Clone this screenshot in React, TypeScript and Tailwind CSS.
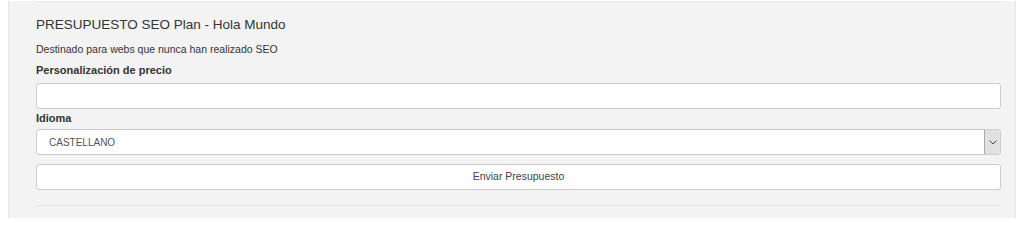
import React from "react";

const App = () => {
  return (
    <div className="h-[218px] w-[1024px] bg-white overflow-hidden font-['Liberation_Sans',Arial,sans-serif] text-[#333]">
      <div className="ml-[8px] w-[1008px] h-full border-x border-[#e3e3e3] bg-[#f3f3f3] pl-[27px] pr-[14px]">
        <div className="h-[1px] mt-[1px] bg-[#e6e6e6]" />

        <h3 className="mt-[15px] text-[13.5px] leading-[16px] text-[#333]">
          PRESUPUESTO SEO Plan - Hola Mundo
        </h3>
        <p className="mt-[10px] text-[10.5px] leading-[13px] text-[#333]">
          Destinado para webs que nunca han realizado SEO
        </p>

        <label className="block mt-[8px] text-[11px] leading-[13px] font-bold text-[#333]">
          Personalización de precio
        </label>
        <input
          type="text"
          className="block mt-[6px] w-full h-[26px] rounded-[3px] border border-[#ccc] bg-white px-2 text-[11px] outline-none"
        />

        <label className="block mt-[3px] text-[11px] leading-[13px] font-bold text-[#333]">
          Idioma
        </label>
        <div className="mt-[4px] flex h-[26px] w-full rounded-[3px] border border-[#ccc] bg-white overflow-hidden">
          <div className="flex-1 flex items-center pl-[12px] text-[10px] text-[#555]">
            CASTELLANO
          </div>
          <div className="w-[16px] flex items-center justify-center border-l border-[#aaa] bg-[#e1e1e1]">
            <svg width="8" height="5" viewBox="0 0 8 5" fill="none">
              <path d="M0.5 0.5 L4 4 L7.5 0.5" stroke="#444" strokeWidth="1" />
            </svg>
          </div>
        </div>

        <button className="mt-[9px] block w-full h-[26px] rounded-[3px] border border-[#ccc] bg-white text-[10.5px] text-[#444]">
          Enviar Presupuesto
        </button>

        <div className="h-[1px] mt-[15px] bg-[#e6e6e6]" />
      </div>
    </div>
  );
};

export default App;
